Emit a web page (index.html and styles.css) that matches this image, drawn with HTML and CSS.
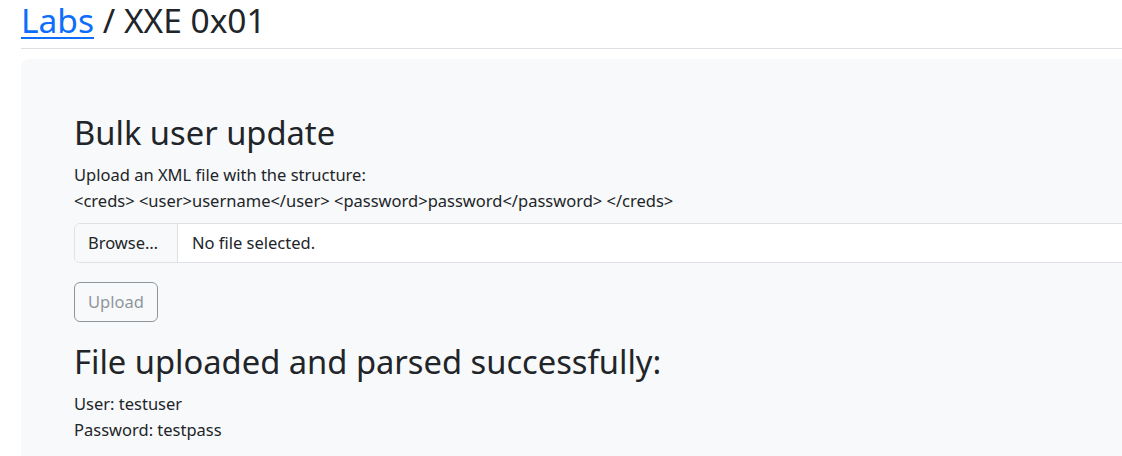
FILE: index.html
```html
<!DOCTYPE html>
<html lang="en">
<head>
<meta charset="utf-8">
<title>XXE 0x01</title>
<link rel="stylesheet" href="styles.css">
</head>
<body>
<div class="page">
  <h1 class="title"><a href="#" class="title-link">Labs</a> / XXE 0x01</h1>
  <hr class="rule">
  <div class="panel">
    <h1 class="heading">Bulk user update</h1>
    <p class="intro">Upload an XML file with the structure:<br>&lt;creds&gt; &lt;user&gt;username&lt;/user&gt; &lt;password&gt;password&lt;/password&gt; &lt;/creds&gt;</p>
    <div class="file-input">
      <span class="file-button">Browse…</span>
      <span class="file-name">No file selected.</span>
    </div>
    <button class="upload-btn" disabled>Upload</button>
    <h1 class="heading result-heading">File uploaded and parsed successfully:</h1>
    <p class="result">User: testuser<br>Password: testpass</p>
  </div>
</div>
</body>
</html>
```
FILE: styles.css
```css
html, body {
  margin: 0;
  padding: 0;
  overflow: hidden;
  background: #ffffff;
}

body {
  font-family: "Noto Sans", "Open Sans", sans-serif;
  font-size: 16.5px;
  line-height: 26px;
  color: #212529;
}

.page {
  width: 1400px;
  padding: 0 0 0 21px;
}

.title {
  margin: 0;
  font-size: 33.5px;
  font-weight: 400;
  line-height: 1.2;
}

.title-link {
  color: #0d6efd;
  text-decoration: underline;
  text-decoration-thickness: 2px;
  text-underline-offset: 4px;
}

.rule {
  margin: 8px 0 0 0;
  border: 0;
  border-top: 1px solid #dcdfe3;
  height: 0;
}

.panel {
  margin-top: 10px;
  background: #f8f9fa;
  border-radius: 8px;
  padding: 53.5px 0 60px 53px;
}

.heading {
  margin: 0;
  font-size: 32.7px;
  font-weight: 400;
  line-height: 1.2;
}

.intro {
  margin: 10px 0 0 0;
}

.file-input {
  margin-top: 9px;
  display: flex;
  align-items: stretch;
  height: 40px;
  box-sizing: border-box;
  border: 1px solid #dee2e6;
  border-radius: 6px;
  background: #ffffff;
  overflow: hidden;
}

.file-button {
  display: flex;
  align-items: center;
  box-sizing: border-box;
  width: 103px;
  padding: 0 0 0 13px;
  background: #f8f9fa;
  border-right: 1px solid #dee2e6;
}

.file-name {
  display: flex;
  align-items: center;
  padding: 0 14px;
}

.upload-btn {
  display: block;
  margin-top: 19px;
  height: 40px;
  box-sizing: border-box;
  padding: 0 13px;
  font-family: inherit;
  font-size: 16.5px;
  color: #6c757d;
  background: transparent;
  border: 1px solid #6c757d;
  border-radius: 6px;
  opacity: 0.75;
}

.result-heading {
  margin-top: 20px;
}

.result {
  margin: 10px 0 0 0;
}
```
